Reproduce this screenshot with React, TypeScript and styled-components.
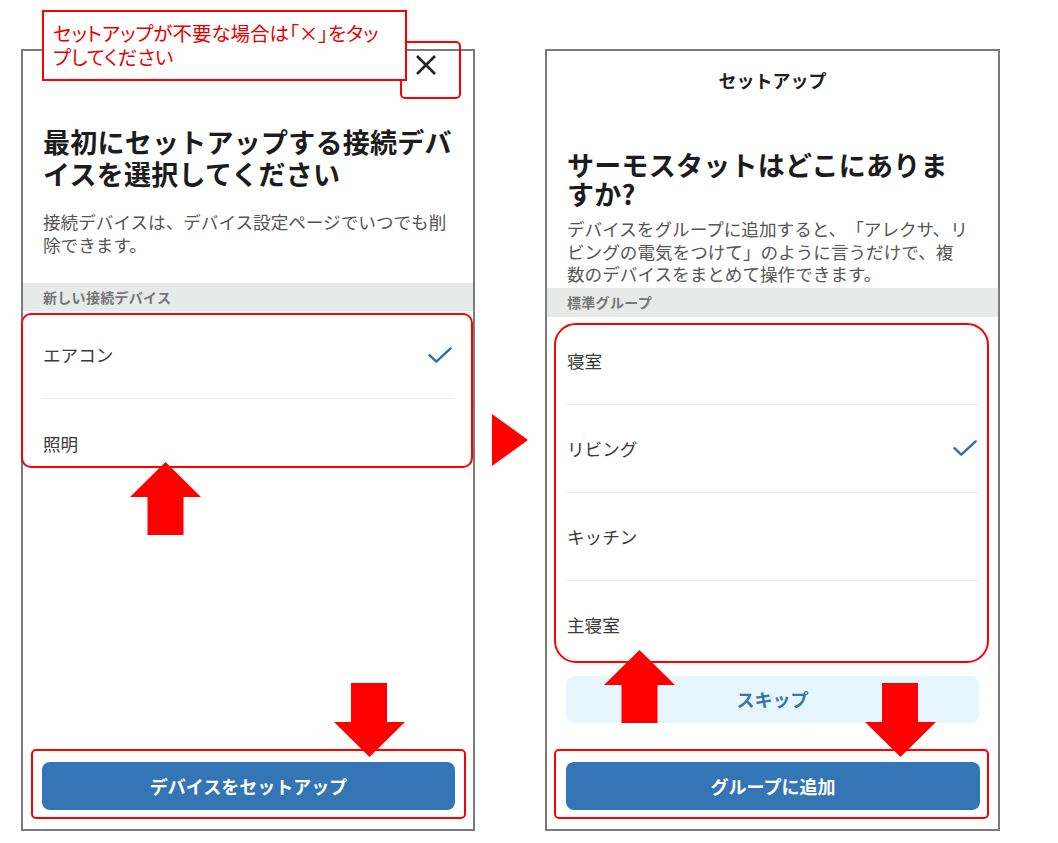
import React from "react";
import styled, { createGlobalStyle } from "styled-components";

const GlobalStyle = createGlobalStyle`
  html, body { margin: 0; padding: 0; background: #fff; }
  body {
    font-family: "Noto Sans CJK JP", "Noto Sans", sans-serif;
    color: #222;
    text-spacing-trim: space-all;
  }
`;

const Page = styled.div`
  position: relative;
  width: 1058px;
  box-sizing: border-box;
  padding: 49px 0 12px 21px;
  display: flex;
  align-items: flex-start;
  gap: 17px;
`;

const Phone = styled.section<{ $w: number }>`
  position: relative;
  width: ${(p) => p.$w}px;
  height: 782px;
  box-sizing: border-box;
  border: 2px solid #7b7b7b;
  background: #fff;
  display: flex;
  flex-direction: column;
`;

const NextMark = styled.svg`
  align-self: center;
  flex: none;
  width: 36px;
  height: 52px;
`;

/* ---------- phone chrome ---------- */

const TopBar = styled.div`
  height: 75px;
  flex: none;
  display: flex;
  justify-content: flex-end;
  align-items: flex-start;
  padding: 4px 37px 0 0;
  box-sizing: border-box;
`;

const CloseButton = styled.button`
  width: 20px;
  height: 20px;
  padding: 0;
  border: none;
  background: none;
  display: flex;
  color: #222;
`;

const HeaderBar = styled.div`
  height: 58px;
  flex: none;
  display: flex;
  align-items: center;
  justify-content: center;
  font-size: 18px;
  font-weight: 700;
  color: #1e1e1e;
`;

const Title = styled.h1<{ $lh: number; $top: number }>`
  margin: ${(p) => p.$top}px 0 0;
  padding: 0 20px;
  font-size: 27px;
  font-weight: 700;
  line-height: ${(p) => p.$lh}px;
  letter-spacing: 0.25px;
  color: #1c1c1c;
  white-space: nowrap;
`;

const Lead = styled.p<{ $lh: number; $top: number }>`
  margin: ${(p) => p.$top}px 0 0;
  padding: 0 20px;
  font-size: 17.6px;
  line-height: ${(p) => p.$lh}px;
  color: #555;
  white-space: nowrap;
`;

const SectionBand = styled.div<{ $top: number; $h: number }>`
  margin-top: ${(p) => p.$top}px;
  height: ${(p) => p.$h}px;
  flex: none;
  background: #e8eaea;
  padding: 0 20px;
  display: flex;
  align-items: center;
  font-size: 14px;
  font-weight: 700;
  color: #767676;
  letter-spacing: 0.3px;
`;

const List = styled.ul`
  list-style: none;
  margin: 0;
  padding: 0;
`;

const Row = styled.li`
  height: 88px;
  box-sizing: border-box;
  margin: 0 19px;
  padding: 0 2px 0 1px;
  border-bottom: 1px solid #ececec;
  display: flex;
  align-items: center;
  justify-content: space-between;
  &:last-child {
    border-bottom: none;
  }
`;

const RowLabel = styled.span`
  font-size: 17.6px;
  color: #3a3a3a;
`;

const SkipButton = styled.button`
  margin: 7px 19px 0;
  height: 47px;
  flex: none;
  border: none;
  border-radius: 8px;
  background: #e6f6fc;
  color: #3a73ae;
  font-family: inherit;
  font-size: 18px;
  font-weight: 700;
`;

const Footer = styled.div`
  margin-top: auto;
  padding: 0 18px 19px 19px;
`;

const PrimaryButton = styled.button`
  width: 100%;
  height: 48px;
  border: none;
  border-radius: 8px;
  background: #3475b5;
  color: #fff;
  font-family: inherit;
  font-size: 18px;
  font-weight: 700;
`;

/* ---------- red annotation layer ---------- */

const Highlight = styled.div<{ $l: number; $t: number; $w: number; $h: number; $r: number }>`
  position: absolute;
  left: ${(p) => p.$l}px;
  top: ${(p) => p.$t}px;
  width: ${(p) => p.$w}px;
  height: ${(p) => p.$h}px;
  box-sizing: border-box;
  border: 2px solid #f00;
  border-radius: ${(p) => p.$r}px;
  pointer-events: none;
  z-index: 1;
`;

const Callout = styled.div`
  position: absolute;
  left: 42px;
  top: 10px;
  width: 365px;
  height: 71px;
  box-sizing: border-box;
  border: 2px solid #f00;
  background: #fff;
  padding: 9px 0 0 9px;
  font-size: 19.5px;
  line-height: 24px;
  font-feature-settings: "palt";
  text-spacing-trim: trim-start;
  color: #e60000;
  white-space: nowrap;
  z-index: 4;
`;

const ArrowMark = styled.svg<{ $x: number; $y: number }>`
  position: absolute;
  left: ${(p) => p.$x}px;
  top: ${(p) => p.$y}px;
  z-index: 3;
  overflow: visible;
`;

const Check = () => (
  <svg width="24" height="16" viewBox="0 0 24 16">
    <path
      d="M1.5 8.2 L8.3 14.6 L22.6 1.4"
      fill="none"
      stroke="#2f6db3"
      strokeWidth="2.4"
      strokeLinecap="round"
      strokeLinejoin="round"
    />
  </svg>
);

const CloseIcon = () => (
  <svg width="20" height="20" viewBox="0 0 20 20">
    <path d="M1 1 L19 19 M19 1 L1 19" stroke="currentColor" strokeWidth="2.6" strokeLinecap="butt" />
  </svg>
);

const UpArrow = ({ x, y }: { x: number; y: number }) => (
  <ArrowMark $x={x} $y={y} width="71" height="73" viewBox="0 0 71 73">
    <polygon points="35.5,0 71,35 53.5,35 53.5,73 17.5,73 17.5,35 0,35" fill="#f00" />
  </ArrowMark>
);

const DownArrow = ({ x, y }: { x: number; y: number }) => (
  <ArrowMark $x={x} $y={y} width="71" height="74" viewBox="0 0 71 74">
    <polygon points="17,0 53,0 53,39 71,39 35.5,74 0,39 17,39" fill="#f00" />
  </ArrowMark>
);

export default function App() {
  return (
    <>
      <GlobalStyle />
      <Page>
        <Phone $w={454}>
          <TopBar>
            <CloseButton aria-label="閉じる">
              <CloseIcon />
            </CloseButton>
          </TopBar>
          <Highlight $l={377} $t={-10} $w={61} $h={58} $r={5} />
          <Title $lh={32} $top={0}>
            最初にセットアップする接続デバ
            <br />
            イスを選択してください
          </Title>
          <Lead $lh={23} $top={20}>
            接続デバイスは、デバイス設定ページでいつでも削
            <br />
            除できます。
          </Lead>
          <SectionBand $top={27} $h={28}>
            新しい接続デバイス
          </SectionBand>
          <List>
            <Row>
              <RowLabel>エアコン</RowLabel>
              <Check />
            </Row>
            <Row>
              <RowLabel>照明</RowLabel>
            </Row>
          </List>
          <Highlight $l={-2} $t={262} $w={452} $h={155} $r={10} />
          <Footer>
            <PrimaryButton>デバイスをセットアップ</PrimaryButton>
          </Footer>
          <Highlight $l={8} $t={698} $w={435} $h={70} $r={5} />
        </Phone>

        <NextMark viewBox="0 0 36 52">
          <polygon points="0,0 36,26 0,52" fill="#f00" />
        </NextMark>

        <Phone $w={455}>
          <HeaderBar>セットアップ</HeaderBar>
          <Title $lh={29} $top={41}>
            サーモスタットはどこにありま
            <br />
            すか?
          </Title>
          <Lead $lh={22.5} $top={10}>
            デバイスをグループに追加すると、「アレクサ、リ
            <br />
            ビングの電気をつけて」のように言うだけで、複
            <br />
            数のデバイスをまとめて操作できます。
          </Lead>
          <SectionBand $top={2} $h={29}>
            標準グループ
          </SectionBand>
          <List>
            <Row>
              <RowLabel>寝室</RowLabel>
            </Row>
            <Row>
              <RowLabel>リビング</RowLabel>
              <Check />
            </Row>
            <Row>
              <RowLabel>キッチン</RowLabel>
            </Row>
            <Row>
              <RowLabel>主寝室</RowLabel>
            </Row>
          </List>
          <Highlight $l={7} $t={272} $w={435} $h={340} $r={22} />
          <SkipButton>スキップ</SkipButton>
          <Footer>
            <PrimaryButton>グループに追加</PrimaryButton>
          </Footer>
          <Highlight $l={7} $t={698} $w={435} $h={70} $r={5} />
        </Phone>

        <Callout>
          セットアップが不要な場合は「×」をタッ
          <br />
          プしてください
        </Callout>
        <UpArrow x={130} y={462} />
        <DownArrow x={334} y={683} />
        <UpArrow x={604} y={650} />
        <DownArrow x={865} y={683} />
      </Page>
    </>
  );
}
